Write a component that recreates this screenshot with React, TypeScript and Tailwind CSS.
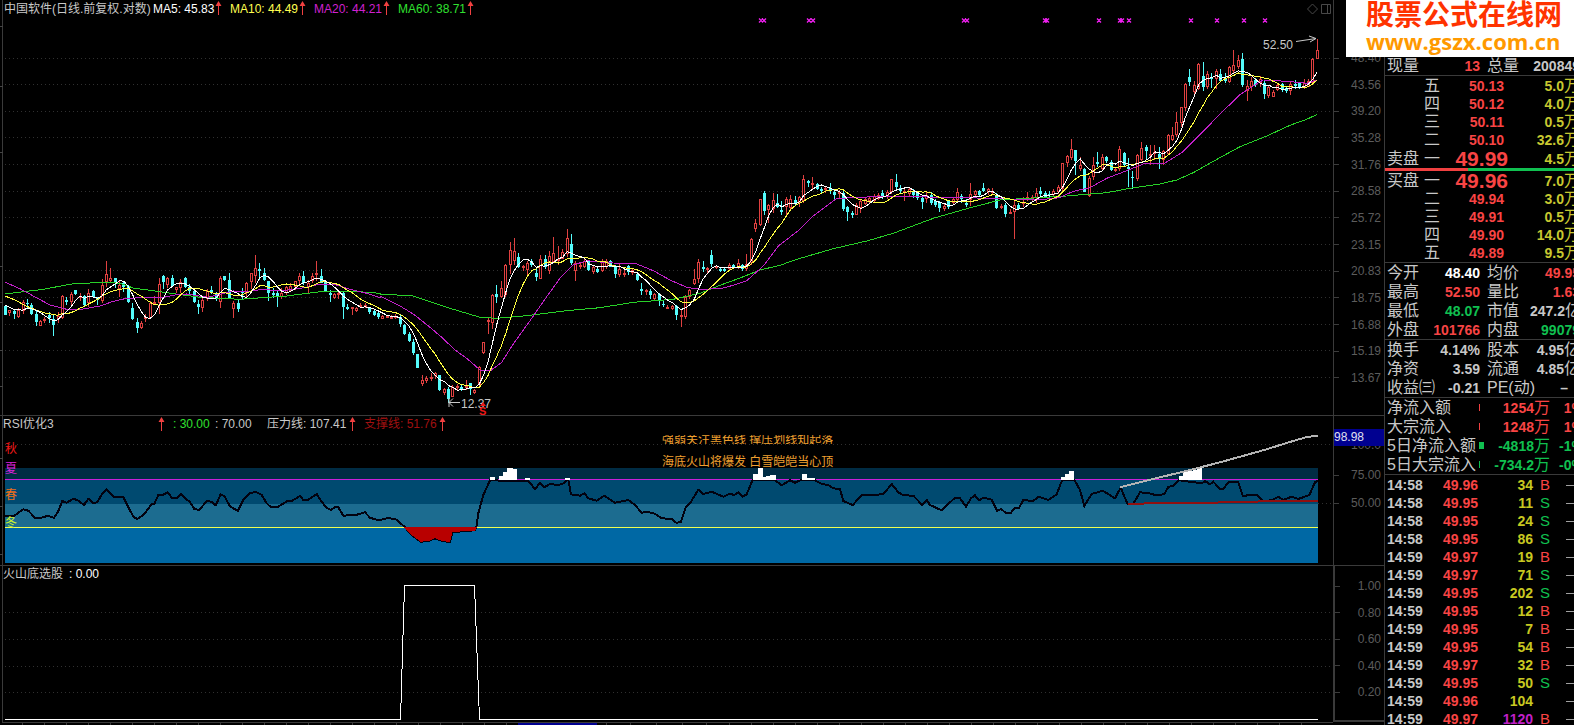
import React from "react";

type Candle = [high: number, top: number, bottom: number, low: number, up: 0 | 1];
type Pt = [number, number];

/* Candle data is stored in thirds of a pixel, measured from the top of each block. */
const blocks: { base: number; rows: Candle[] }[] = [
  {
    base: 240,
    rows: [
      [196,197,224,226,0],[210,211,220,228,1],[210,213,222,236,0],[205,210,232,234,1],[180,186,212,222,1],
      [178,188,192,205,0],[190,195,222,226,0],[210,221,246,257,0],[240,243,257,258,1],[232,236,244,248,1],
      [215,225,235,250,0],[225,237,254,288,0],[216,228,238,248,1],[165,167,235,237,1],[170,181,186,195,0],
      [156,162,186,200,1],[150,151,162,166,0],[158,167,171,184,1],[165,168,196,200,0],[148,158,188,200,1],
      [150,153,172,175,0],[172,175,180,196,0],[116,134,182,188,1],[64,103,125,140,1],[84,115,122,130,1],
      [113,114,125,145,0],[120,135,146,170,1],[122,128,140,155,0],[136,137,186,190,0],[190,205,238,240,0],
      [234,247,264,278,0],[244,248,265,267,1],[222,232,238,246,1],[184,190,235,237,1],[168,186,190,194,1],
      [115,133,188,222,1],[104,107,126,146,0],[112,114,136,143,1],[105,114,137,139,0],[140,142,150,160,1],
      [118,126,144,160,1],[110,113,140,143,0],[132,142,152,166,0],[148,152,186,190,0],[180,191,200,222,0],
      [174,180,204,216,1],[148,154,176,184,1],[138,150,158,162,0],[156,162,178,182,0],[108,113,186,204,1],
      [108,109,121,124,0],[98,120,174,178,0],[184,190,206,234,1],[180,189,206,215,0],[145,155,160,180,0],
      [126,130,160,178,1],[98,100,126,146,1],[44,85,108,130,1],[68,88,92,120,0],[84,98,120,124,0],
      [122,123,160,182,0],[145,160,166,174,0],[150,160,167,202,0],[145,158,170,178,1],[138,142,158,164,1],
      [130,138,152,156,1],[122,124,140,150,1],[100,108,124,134,1],[94,108,128,134,0],[120,128,140,158,1],
      [98,108,124,130,1],[62,98,106,124,1],[86,108,128,130,0],[122,127,154,156,0],[150,160,166,186,0],
      [158,162,174,178,1],[154,158,166,176,1],[155,160,202,237,0],[192,200,206,210,0],[200,202,206,224,1],
      [202,205,212,216,1],[190,196,202,204,1],[190,194,200,204,1],[200,203,216,222,0],[208,212,226,228,0],
      [214,220,232,238,0],[226,229,236,238,1],[226,229,232,234,1],[226,230,233,236,1],[222,228,233,236,1],
    ],
  },
  {
    base: 200,
    rows: [
      [344,350,372,382,0],[372,374,402,404,0],[396,402,423,426,0],[418,425,460,466,0],[461,462,503,504,0],
      [524,541,551,557,1],[528,534,542,550,1],[520,530,534,544,1],[516,520,528,536,1],[524,526,570,572,0],
      [564,568,580,584,1],[562,568,596,610,0],[555,560,590,592,1],[552,557,562,572,1],[556,562,566,574,0],
      [541,558,564,570,1],[548,550,568,584,0],[566,570,578,582,1],[498,500,556,560,1],[426,427,460,462,1],
      [355,360,367,402,1],[282,284,370,388,1],[256,282,292,309,0],[244,264,292,294,1],[192,194,286,290,1],
      [126,150,194,222,1],[114,154,184,194,1],[158,170,200,204,0],[194,197,203,212,1],[184,188,210,228,1],
      [178,184,196,200,0],[202,220,230,243,0],[164,177,236,237,1],[164,178,200,206,0],[154,168,212,222,1],
      [110,158,186,190,1],[138,178,184,196,1],[146,156,176,178,1],[86,115,162,170,1],[102,132,190,194,0],
      [182,190,214,242,1],[190,196,202,206,1],[170,182,202,204,1],[180,182,210,212,0],[194,202,216,222,1],
      [198,206,216,219,0],[177,182,214,216,1],[178,184,202,208,1],[180,184,200,202,0],[196,202,222,234,0],
      [192,208,226,232,1],[206,218,221,230,1],[194,198,216,226,0],[205,210,220,226,1],[218,222,240,244,0],
      [250,266,272,286,0],[266,269,274,284,1],[268,272,286,298,0],[278,282,296,302,1],[280,283,302,318,0],
      [300,312,316,320,0],[316,320,324,328,1],[314,317,328,330,1],[314,317,346,360,0],[330,344,348,382,1],
      [286,292,350,356,1],[266,270,290,296,1],[206,236,253,256,1],[176,186,238,250,1],[184,200,206,216,0],
      [200,204,210,218,1],[150,165,192,200,0],[194,198,202,208,1],[200,206,212,216,0],[204,208,212,216,0],
      [190,194,208,212,1],[192,196,204,208,0],[176,190,204,208,1],[192,196,208,212,0],[162,192,208,214,1],
      [114,116,188,194,1],
    ],
  },
  {
    base: 120,
    rows: [
      [296,310,328,336,1],[236,238,316,318,1],[213,218,272,284,0],[252,254,270,308,1],[220,240,268,278,1],
      [222,248,260,264,0],[244,270,276,286,0],[230,236,262,284,1],[224,236,264,272,1],[228,240,248,256,0],
      [228,232,250,262,1],[165,178,244,250,1],[180,184,190,202,0],[170,188,193,206,1],[188,192,206,210,0],
      [202,208,213,222,0],[198,203,208,218,1],[190,203,212,222,0],[210,215,224,240,0],[210,215,220,236,1],
      [212,218,268,274,0],[258,260,275,302,0],[272,280,284,294,0],[250,255,284,286,1],[238,244,264,278,1],
      [230,236,252,256,1],[230,234,244,250,1],[222,228,242,250,1],[220,226,236,240,1],[210,220,232,238,0],
      [210,216,232,238,1],[176,178,216,222,1],[163,186,200,208,0],[196,204,212,220,0],[206,212,220,244,1],
      [202,208,222,228,1],[206,212,226,234,0],[216,220,234,240,0],[228,234,246,266,0],[216,224,236,250,1],
      [216,224,250,256,0],[236,242,256,260,0],[244,250,263,276,0],[250,258,268,274,1],[240,244,260,266,0],
      [232,238,248,252,1],[204,216,240,246,1],[222,228,236,250,0],[236,248,256,262,0],[188,222,240,258,1],
      [210,214,224,230,1],[210,214,224,230,0],[188,203,212,216,0],[204,208,216,226,1],[204,212,220,226,1],
      [218,224,264,268,0],[252,258,262,266,1],[250,256,282,290,0],[268,275,280,283,1],[244,256,276,356,1],
      [250,256,266,270,0],[232,246,252,262,1],[216,232,240,244,1],[224,230,236,244,1],[204,218,234,248,1],
      [202,214,222,228,0],[212,218,230,234,0],[214,222,226,230,0],[206,214,224,230,1],[196,202,216,222,1],
    ],
  },
  {
    base: 0,
    rows: [
      [488,490,566,574,1],[466,469,488,502,1],[416,448,474,480,1],[450,450,482,524,0],[470,494,506,512,1],
      [505,507,575,577,0],[528,534,588,590,1],[472,494,530,540,1],[456,486,492,500,0],[462,470,508,512,1],
      [468,472,484,490,0],[480,486,510,514,0],[500,506,514,516,1],[438,446,506,512,1],[456,460,494,500,0],
      [474,500,506,562,0],[512,530,534,566,0],[462,466,538,542,1],[426,443,480,484,1],[434,440,452,480,0],
      [436,462,466,494,1],[436,456,462,480,1],[442,462,478,506,0],[450,454,480,494,1],[402,404,462,466,1],
      [380,406,420,424,1],[336,366,406,412,1],[320,322,368,382,1],[248,251,324,334,1],[208,230,246,258,0],
      [244,254,276,286,1],[190,193,268,270,1],[186,228,260,272,0],[212,222,262,266,1],[220,234,238,264,0],
      [208,212,238,266,1],[208,222,242,246,0],[220,234,244,248,0],[198,202,246,248,1],[150,194,214,218,1],
      [164,180,202,206,1],[158,178,254,260,0],[240,258,274,302,1],[230,244,262,272,1],[234,240,256,262,0],
      [228,236,250,262,1],[244,249,282,296,0],[258,262,288,294,1],[270,276,290,292,1],[250,255,270,274,1],
      [248,252,270,276,0],[258,264,272,278,0],[246,252,274,286,1],[240,252,258,268,0],[248,250,262,266,0],
      [238,250,262,266,1],[236,242,260,262,1],[174,176,250,252,1],[116,150,176,178,1],
    ],
  },
];

const step = 4.387;
const candles = blocks
  .flatMap((b) => b.rows.map(([h, t, bt, l, up]) => ({ h: b.base + h / 3, t: b.base + t / 3, b: b.base + bt / 3, l: b.base + l / 3, up: up === 1 })))
  .map((c, i) => ({ ...c, x: 5.5 + step * i }));

const closes = candles.map((c) => (c.up ? c.t : c.b));

function average(n: number, lead: Pt[]): string {
  const pts: Pt[] = [...lead];
  for (let i = n - 1; i < closes.length; i++) {
    let s = 0;
    for (let k = 0; k < n; k++) s += closes[i - k];
    pts.push([candles[i].x, s / n]);
  }
  return pts.map((p) => p[0].toFixed(1) + "," + p[1].toFixed(1)).join(" ");
}

function trace(parts: [number, number, Pt[]][]): string {
  return parts
    .flatMap(([ox, oy, pts]) => pts.map((p) => (ox + p[0] / 3).toFixed(1) + "," + (oy + p[1] / 3).toFixed(1)))
    .join(" ");
}

const ma5 = average(5, [[5, 305], [13, 309]]);
const ma10 = average(10, [[5, 296], [15, 300], [26, 306], [36, 310]]);
const ma20 = trace([
  [0, 240, [[16,127],[60,146],[100,168],[150,195],[200,208],[250,207],[300,198],[340,184],[380,175],[430,173],[480,174],[530,164],[560,162],[590,167],[625,172],[650,165],[700,153],[740,155],[790,148],[840,153],[880,148],[920,142],[960,132],[1000,132],[1050,148],[1100,160],[1140,173]]],
  [380, 200, [[0,288],[60,318],[100,342],[150,382],[185,412],[225,450],[260,475],[300,510],[330,513],[365,487],[400,432],[450,362],[500,290],[540,235],[580,195],[620,182],[660,186],[700,189],[770,192],[820,212],[870,240],[920,262],[960,268],[1020,266],[1060,256],[1100,242],[1150,198]]],
  [700, 120, [[235,378],[300,328],[340,288],[410,235],[440,234],[520,230],[650,230],[750,233],[830,234],[900,236],[1000,239],[1060,236]]],
  [1040, 0, [[60,592],[100,574],[150,563],[200,535],[250,516],[310,492],[375,489],[425,458],[480,404],[540,342],[600,284],[640,258],[670,240],[740,244],[800,250],[830,241]]],
]);
const ma60 = trace([
  [0, 240, [[16,162],[130,148],[220,131],[320,127],[360,130],[400,144],[500,158],[600,172],[720,178],[860,168],[960,155],[1060,154],[1140,160]]],
  [380, 200, [[0,282],[100,288],[200,322],[300,352],[350,355],[440,347],[560,332],[660,323],[760,307],[880,298],[960,280],[1020,256],[1080,234],[1140,210],[1200,196]]],
  [700, 120, [[290,418],[400,386],[500,363],[580,340],[700,295],[800,266],[900,240],[1000,234],[1100,228]]],
  [1040, 0, [[140,583],[200,578],[270,565],[360,552],[410,540],[460,518],[520,484],[600,440],[680,408],[750,376],[800,358],[832,343]]],
]);

const rsi = trace([
  [0, 405, [[16,333],[40,334],[70,313],[85,317],[105,338],[125,338],[145,332],[162,339],[175,318],[187,288],[200,293],[220,281],[235,287],[252,300],[265,281],[280,294],[292,292],[305,269],[320,254],[340,275],[370,276],[385,306],[400,335],[412,342],[430,330],[455,298],[463,297],[475,270],[490,269],[503,262],[515,278],[530,279],[543,267],[560,284],[570,291],[583,312],[598,315],[620,288],[635,290],[647,301],[662,268],[673,273],[690,304],[713,318],[730,285],[750,265],[767,260],[785,270],[800,295],[812,306],[835,305],[860,289],[875,288],[900,273],[910,285],[925,284],[950,267],[965,290],[980,309],[993,315],[1005,306],[1015,307],[1030,332],[1070,329],[1095,322],[1110,338],[1135,346],[1165,339],[1190,344],[1215,367],[1235,390],[1262,410],[1285,408],[1305,400],[1325,407],[1350,412],[1357,382],[1395,378],[1425,376],[1430,362],[1435,325]]],
  [480, 405, [[10,270],[30,226],[110,228],[145,227],[165,252],[180,234],[193,247],[210,237],[235,240],[250,235],[265,224],[273,268],[300,272],[313,265],[325,280],[350,287],[372,272],[405,293],[445,285],[465,300],[485,323],[500,320],[525,326],[545,340],[575,342],[590,354],[603,350],[617,308],[630,295],[655,254],[670,267],[695,260],[730,275],[750,266],[763,270],[775,262],[787,275],[800,268],[818,224],[885,226],[905,241],[930,226],[945,233],[965,224],[1005,226],[1025,237],[1045,240],[1060,250],[1080,252],[1090,288],[1118,300],[1145,271],[1210,268],[1235,237],[1255,262]]],
  [900, 405, [[10,271],[40,272],[67,300],[80,285],[90,300],[125,316],[165,278],[180,280],[198,305],[213,280],[225,271],[237,286],[250,278],[275,284],[292,318],[303,312],[318,324],[333,323],[345,308],[357,309],[370,285],[400,288],[415,275],[445,285],[470,268],[487,224],[523,224],[540,255],[553,303],[575,267],[608,257],[645,280],[662,248],[683,298],[700,296],[720,262],[745,264],[765,270],[793,268],[805,246],[820,242],[837,226],[905,235],[915,228],[930,238],[940,230],[960,252],[970,252],[985,232],[1015,232],[1028,272],[1070,270],[1090,288],[1115,286],[1135,275],[1150,285],[1175,275],[1195,282],[1228,270],[1245,232],[1254,227]]],
]);
const oversold = trace([[0, 405, [[1209,366],[1235,390],[1262,410],[1285,408],[1305,400],[1325,407],[1350,412],[1357,382],[1395,378],[1425,379],[1431,366]]]]);
const pressure = trace([[900, 405, [[660,247],[750,224],[850,200],[960,172],[1100,133],[1150,117],[1220,96],[1254,92]]]]);
const support = trace([[900, 405, [[683,298],[745,295],[930,293],[1100,289],[1254,288]]]]);

/* [left, top, width] of each snow-cap column; all of them stand on the 70 line */
const caps: [number, number, number][] = [
  [490,477,5],[499,476,5],[503,472,5],[507,468,6],[512,469,5],[525,478,5],[565,478,5],
  [753,474,5],[758,468,5],[762,477,5],[766,476,5],[770,475,6],[802,474,5],[807,478,8],
  [1061,477,4],[1065,474,5],[1069,471,5],[1179,476,4],[1183,472,5],[1187,471,6],[1193,470,4],[1197,467,5],
];

const grid = [58,84,111,137,164,191,217,244,270,297,324,350,377];
const marks = [761,764,809,813,964,967,1045,1047,1099,1120,1122,1129,1191,1217,1244,1265];
const days = [22,44,66,88,110,132,154,176,198,220,242,264,286,308,330,352,374,396,418,440,462,484,506,606,630,656,682,706,729,751,773,795,817,839,861,883,905,927,949,971,993,1015,1037,1059,1081,1103,1125,1147,1169,1191,1213,1235,1257,1279,1301];

function Arrow({ className }: { className: string }) {
  return (
    <svg className={"absolute top-px h-[14px] w-[7px] " + className} viewBox="0 0 7 14" aria-hidden="true">
      <path d="M3.5 0 6.5 5H.5zM3 4h1v10H3z" fill="#f04040" />
    </svg>
  );
}

function LeftTicks({ ys }: { ys: number[] }) {
  return <path d={ys.map((y) => `M0 ${y}.5h3`).join("")} stroke="#444" />;
}

function AxisLabel({ children }: { children: string }) {
  return (
    <div className="flex h-3 items-center justify-between pr-[3px] text-xs leading-3">
      <span className="h-px w-[5px] bg-[#3c3c3c]" />
      <span>{children}</span>
    </div>
  );
}

function PricePane() {
  return (
    <section className="flex h-[416px] border-b border-[#3a3a3a]">
      <div className="flex min-w-0 flex-1 flex-col">
        <header className="ml-[2px] flex h-[18px] items-center border-l border-[#3a3a3a] text-xs leading-[18px]">
          <h1 className="w-[150px] whitespace-nowrap pl-px text-[#c8c8c8]">中国软件(日线.前复权.对数)</h1>
          <span className="relative w-[77px] text-white">MA5: 45.83<Arrow className="left-[62px]" /></span>
          <span className="relative w-[84px] text-[#ffff50]">MA10: 44.49<Arrow className="left-[69px]" /></span>
          <span className="relative w-[84px] text-[#d020d0]">MA20: 44.21<Arrow className="left-[69px]" /></span>
          <span className="relative w-[84px] text-[#30e030]">MA60: 38.71<Arrow className="left-[69px]" /></span>
          <svg className="ml-auto h-[12px] w-[26px]" viewBox="0 0 26 12" fill="none" stroke="#484848" aria-hidden="true">
            <path d="M5.5 1 10.5 6 5.5 11 .5 6zM14.5 1.5h9v9h-9zM20.5 1.5v9" />
          </svg>
        </header>
        <svg className="min-h-0 w-full flex-1" viewBox="0 18 1333 397" preserveAspectRatio="none" role="img" aria-label="日线">
          <path d="M2.5 18V415" stroke="#3a3a3a" shapeRendering="crispEdges" />
          <LeftTicks ys={[26, 86, 152, 266, 302, 350, 386]} />
          <path d={grid.map((y) => `M5 ${y}.5H1333`).join("")} stroke="#303030" strokeDasharray="1 3" shapeRendering="crispEdges" />
          <g shapeRendering="crispEdges">
            {candles.map((c, i) => {
              const x = Math.floor(c.x);
              const t = Math.round(c.t);
              const h = Math.max(1, Math.round(c.b) - t);
              return c.up ? (
                <g key={i} stroke="#e04040" fill="#000">
                  <path d={`M${x + 0.5} ${Math.round(c.h)}V${Math.round(c.l)}`} />
                  <rect x={x - 0.5} y={t + 0.5} width={2} height={Math.max(1, h - 1)} />
                </g>
              ) : (
                <g key={i} fill="#54fcfc">
                  <rect x={x} y={Math.round(c.h)} width={1} height={Math.round(c.l) - Math.round(c.h)} />
                  <rect x={x - 1} y={t} width={3} height={h} />
                </g>
              );
            })}
          </g>
          <g fill="none" shapeRendering="crispEdges">
            <polyline points={ma60} stroke="#28d028" />
            <polyline points={ma20} stroke="#c020c8" />
            <polyline points={ma10} stroke="#ffff40" />
            <polyline points={ma5} stroke="#fff" />
          </g>
          <path d={marks.map((x) => `M${x - 2} 18.5l4 4m0-4l-4 4`).join("")} stroke="#f020f0" strokeWidth="1.300" />
          <g fontSize="12" fill="#c8c8c8">
            <text x="1263" y="49">52.50</text>
            <text x="461" y="408">12.37</text>
          </g>
          <path d="M1296 41.500 1316 38.500M1309 36l7 2.500-6 3.500M460 402.500H449M453 398.500l-4 4 4 4M449 398v9" fill="none" stroke="#c8c8c8" />
          <path d="M483 402l3 4h-6z" fill="#f01818" />
          <text x="479" y="415" fontSize="11" fontWeight="bold" fill="#f01818">S</text>
        </svg>
      </div>
      <div className="flex w-[51px] flex-col justify-between border-l border-[#3a3a3a] pb-[31px] pt-[52px] text-[#5c5c5c]">
        {["48.40","43.56","39.20","35.28","31.76","28.58","25.72","23.15","20.83","18.75","16.88","15.19","13.67"].map((v) => (
          <AxisLabel key={v}>{v}</AxisLabel>
        ))}
      </div>
    </section>
  );
}

function RsiPane() {
  return (
    <section className="flex h-[150px] border-b border-[#3a3a3a]">
      <div className="relative flex min-w-0 flex-1 flex-col">
        <header className="ml-[2px] flex h-[16px] items-center border-l border-[#3a3a3a] text-xs leading-4 text-[#c8c8c8]">
          <h2 className="relative w-[170px]">RSI优化3<Arrow className="left-[155px]" /></h2>
          <span className="w-[42px] text-[#30e030]">: 30.00</span>
          <span className="w-[52px]">: 70.00</span>
          <span className="relative w-[97px]">压力线: 107.41<Arrow className="left-[82px]" /></span>
          <span className="relative w-[90px] text-[#a01010]">支撑线: 51.76<Arrow className="left-[75px]" /></span>
        </header>
        <svg className="min-h-0 w-full flex-1" viewBox="0 432 1333 133" preserveAspectRatio="none" role="img" aria-label="RSI优化3">
          <path d="M2.5 432V565" stroke="#3a3a3a" shapeRendering="crispEdges" />
          <LeftTicks ys={[458, 506, 554]} />
          <path d="M5 444.500H1333M1318 503.500H1333" stroke="#303030" strokeDasharray="1 3" shapeRendering="crispEdges" />
          <g shapeRendering="crispEdges">
            <rect x="5" y="468" width="1313" height="12" fill="#002c44" />
            <rect x="5" y="480" width="1313" height="24" fill="#004a70" />
            <rect x="5" y="504" width="1313" height="24" fill="#1c6c90" />
            <rect x="5" y="528" width="1313" height="35" fill="#0068a4" />
            <rect x="5" y="479" width="1313" height="1" fill="#c820d8" />
            <rect x="5" y="527" width="1313" height="1" fill="#f0ff50" />
          </g>
          <polyline points={rsi} fill="none" stroke="#020210" strokeWidth="2" shapeRendering="crispEdges" />
          <polygon points={oversold} fill="#b80000" shapeRendering="crispEdges" />
          <g fill="#fff" shapeRendering="crispEdges">
            {caps.map(([x, y, w]) => (
              <rect key={x} x={x} y={y} width={w} height={480 - y} />
            ))}
          </g>
          <polyline points={support} fill="none" stroke="#901010" strokeWidth="2" shapeRendering="crispEdges" />
          <polyline points={pressure} fill="none" stroke="#b4b4b4" strokeWidth="2" shapeRendering="crispEdges" />
        </svg>
        <span className="absolute left-[5px] top-[27px] text-xs leading-3 text-[#f01818]">秋</span>
        <span className="absolute left-[5px] top-[47px] text-xs leading-3 text-[#e020e0]">夏</span>
        <span className="absolute left-[5px] top-[73px] text-xs leading-3 text-[#f07018]">春</span>
        <span className="absolute left-[5px] top-[101px] text-xs leading-3 text-[#c8f030]">冬</span>
        <div className="absolute left-[662px] top-[19px] flex h-[9px] items-center overflow-hidden whitespace-nowrap text-xs leading-3 text-[#f0a030]">
          强弱关注黑色线 撑压划线知起落
        </div>
        <div className="absolute left-[662px] top-[39px] whitespace-nowrap text-xs leading-[14px] text-[#f0a030]">海底火山将爆发 白雪皑皑当心顶</div>
      </div>
      <div className="flex w-[51px] flex-col border-l border-[#3a3a3a] pt-[13px] text-[#5c5c5c]">
        <output className="z-10 h-[17px] bg-[#000090] text-xs leading-[17px] text-[#e0e0f0]">98.98</output>
        <div className="-mt-[7px]"><AxisLabel>100.0</AxisLabel></div>
        <div className="mt-[18px]"><AxisLabel>75.00</AxisLabel></div>
        <div className="mt-[16px]"><AxisLabel>50.00</AxisLabel></div>
      </div>
    </section>
  );
}

function SignalPane() {
  return (
    <section className="flex h-[156px]">
      <div className="flex min-w-0 flex-1 flex-col">
        <header className="ml-[2px] flex h-[16px] items-center gap-[6px] border-l border-[#3a3a3a] text-xs leading-4 text-[#c8c8c8]">
          <h2>火山底选股</h2>
          <span className="text-white">: 0.00</span>
        </header>
        <svg className="min-h-0 w-full flex-1" viewBox="0 582 1333 140" preserveAspectRatio="none" role="img" aria-label="火山底选股">
          <path d="M2.5 582V722" stroke="#3a3a3a" shapeRendering="crispEdges" />
          <path d="M5 612.500H1333M5 639.500H1333M5 666.500H1333M5 692.500H1333" stroke="#303030" strokeDasharray="1 3" shapeRendering="crispEdges" />
          <path d="M5 719.500H400.500L404.500 585.500H474.500L479.500 719.500H1318" fill="none" stroke="#fff" shapeRendering="crispEdges" />
        </svg>
      </div>
      <div className="flex w-[51px] flex-col justify-between border-2 border-r-0 border-t-0 border-[#3a3a3a] pb-[22px] pt-[14px] text-[#5c5c5c]">
        {["1.00", "0.80", "0.60", "0.40", "0.20"].map((v) => (
          <AxisLabel key={v}>{v}</AxisLabel>
        ))}
      </div>
    </section>
  );
}

const RED = "text-[#f84444]";
const GREEN = "text-[#10c050]";
const YELLOW = "text-[#c8c830]";
const GREY = "text-[#c8c8c8]";

type Level = [side: string, level: string, price: string, volume: string];
const asks: Level[] = [["", "五", "50.13", "5.0"], ["", "四", "50.12", "4.0"], ["", "三", "50.11", "0.5"], ["", "二", "50.10", "32.6"], ["卖盘", "一", "49.99", "4.5"]];
const bids: Level[] = [["买盘", "一", "49.96", "7.0"], ["", "二", "49.94", "3.0"], ["", "三", "49.91", "0.5"], ["", "四", "49.90", "14.0"], ["", "五", "49.89", "9.5"]];

function Levels({ rows }: { rows: Level[] }) {
  return (
    <table className="w-[193px] table-fixed border-collapse">
      <tbody>
        {rows.map(([side, level, price, volume]) => (
          <tr key={level} className={side ? "h-[19px]" : "h-[18px]"}>
            <th className="w-[37px] p-0 text-left text-base leading-[18px] font-normal text-[#c8c8c8]">{side}</th>
            <th className="w-[17px] p-0 text-left text-base leading-[18px] font-normal text-[#c8c8c8]">{level}</th>
            <td className={"w-[67px] p-0 text-right font-bold leading-[18px] " + RED + (side ? " text-[21px]" : " pr-1 text-sm")}>{price}</td>
            <td className={"p-0 text-right text-sm leading-[16px] font-bold " + YELLOW}>
              {volume}
              <span className="text-base leading-[16px] font-normal">万</span>
            </td>
          </tr>
        ))}
      </tbody>
    </table>
  );
}

type Stat = [string, string, string, string, string, string, string?];

function Stats({ rows }: { rows: Stat[] }) {
  return (
    <table className="w-[193px] table-fixed border-collapse">
      <tbody>
        {rows.map(([a, av, ac, b, bv, bc, unit]) => (
          <tr key={a} className="h-[19px]">
            <th className="w-[45px] whitespace-nowrap p-0 text-left text-base leading-[18px] font-normal text-[#c8c8c8]">{a}</th>
            <td className={"w-[48px] p-0 text-right text-sm leading-[16px] font-bold " + ac}>{av}</td>
            <th className="w-[50px] whitespace-nowrap p-0 pl-[7px] text-left text-base leading-[18px] font-normal text-[#c8c8c8]">{b}</th>
            <td className={"whitespace-nowrap p-0 text-right text-sm leading-[16px] font-bold " + bc}>
              {bv}
              {unit && <span className="text-base leading-[16px] font-normal">{unit}</span>}
            </td>
          </tr>
        ))}
      </tbody>
    </table>
  );
}

const flows: [string, string, string, string, string][] = [
  ["净流入额", "1254", "1%", RED, "w-px bg-[#f04040]"],
  ["大宗流入", "1248", "1%", RED, "w-px bg-[#f04040]"],
  ["5日净流入额", "-4818", "-1%", GREEN, "w-[5px] bg-[#10c050]"],
  ["5日大宗流入", "-734.2", "-0%", GREEN, "w-px bg-[#10c050]"],
];

const trades: [string, string, string, string][] = [
  ["14:58", "49.96", "34", "B"], ["14:58", "49.95", "11", "S"], ["14:58", "49.95", "24", "S"], ["14:58", "49.95", "86", "S"],
  ["14:59", "49.97", "19", "B"], ["14:59", "49.97", "71", "S"], ["14:59", "49.95", "202", "S"], ["14:59", "49.95", "12", "B"],
  ["14:59", "49.95", "7", "B"], ["14:59", "49.95", "54", "B"], ["14:59", "49.97", "32", "B"], ["14:59", "49.95", "50", "S"],
  ["14:59", "49.96", "104", ""], ["14:59", "49.97", "1120", "B"],
];

function QuotePanel() {
  return (
    <aside className="w-[190px] shrink-0 overflow-hidden border-l border-[#3a3a3a]">
      <div className="w-[210px]">
        <div className="border-b border-[#3a3a3a] pl-[2px] pt-[56px]">
          <Stats rows={[["现量", "13", RED, "总量", "200849", GREY]]} />
        </div>
        <div className="pl-[2px] pt-px"><Levels rows={asks} /></div>
        <div className="flex h-[3px]">
          <div className="w-[83px] bg-[#f04040]" />
          <div className="flex-1 bg-[#10c050]" />
        </div>
        <div className="border-b border-[#3a3a3a] pl-[2px]"><Levels rows={bids} /></div>
        <div className="border-b border-[#3a3a3a] pl-[2px]">
          <Stats
            rows={[
              ["今开", "48.40", "text-white", "均价", "49.95", RED],
              ["最高", "52.50", RED, "量比", "1.63", RED],
              ["最低", "48.07", GREEN, "市值", "247.2", GREY, "亿"],
              ["外盘", "101766", RED, "内盘", "99079", GREEN],
            ]}
          />
        </div>
        <div className="border-b border-[#3a3a3a] pl-[2px]">
          <Stats
            rows={[
              ["换手", "4.14%", GREY, "股本", "4.95", GREY, "亿"],
              ["净资", "3.59", GREY, "流通", "4.85", GREY, "亿"],
              ["收益㈢", "-0.21", GREY, "PE(动)", "–", GREY + " pr-3"],
            ]}
          />
        </div>
        <table className="ml-[2px] w-[197px] table-fixed border-collapse">
          <tbody>
            {flows.map(([label, value, pct, color, bar]) => (
              <tr key={label} className="h-[19px]">
                <th className="w-[92px] whitespace-nowrap p-0 text-left text-base leading-[18px] font-normal text-[#c8c8c8]">{label}</th>
                <td className="w-[6px] p-0"><div className={"h-[7px] " + bar} /></td>
                <td className={"w-[65px] whitespace-nowrap p-0 text-right text-sm leading-[16px] font-bold " + color}>
                  {value}
                  <span className="text-base leading-[16px] font-normal">万</span>
                </td>
                <td className={"p-0 text-right text-sm leading-[16px] font-bold " + color}>{pct}</td>
              </tr>
            ))}
          </tbody>
        </table>
        <div className="border-t border-[#3a3a3a] pl-[2px] pt-px">
          <table className="w-[205px] table-fixed border-collapse">
            <tbody>
              {trades.map(([time, price, volume, side], i) => (
                <tr key={i} className="h-[18px] text-sm leading-[18px] font-bold">
                  <td className="w-[46px] p-0 text-[#c8c8c8]">{time}</td>
                  <td className={"w-[45px] p-0 text-right " + RED}>{price}</td>
                  <td className={"w-[55px] p-0 text-right " + (volume === "1120" ? "text-[#c020c8]" : "text-[#c8c820]")}>{volume}</td>
                  <td className={"w-[33px] p-0 pl-[7px] text-[15px] leading-[18px] font-normal " + (side === "B" ? RED : GREEN)}>{side}</td>
                  <td className="p-0"><div className="h-px bg-[#a0a0a0]" /></td>
                </tr>
              ))}
            </tbody>
          </table>
        </div>
      </div>
    </aside>
  );
}

export default function App() {
  return (
    <div className="relative flex h-screen overflow-hidden bg-black font-['Liberation_Sans','Noto_Sans_CJK_SC',sans-serif]">
      <main className="min-w-0 flex-1">
        <PricePane />
        <RsiPane />
        <SignalPane />
        <svg className="block h-[3px] w-full" viewBox="0 0 1384 3" preserveAspectRatio="none" shapeRendering="crispEdges" aria-hidden="true">
          <path d={days.map((x) => `M${x}.5 0v3`).join("") + "M2 .5H1333"} stroke="#3a3a3a" />
          <rect x="518" y="1" width="79" height="2" fill="#000090" />
        </svg>
      </main>
      <QuotePanel />
      <a href="#top" className="absolute right-0 top-0 flex h-[57px] w-[228px] flex-col items-start bg-white pl-[20px] font-bold">
        <span className="whitespace-nowrap text-[28px] leading-[32px] text-[#ff3300]">股票公式在线网</span>
        <span className="font-['Open_Sans',sans-serif] text-[22px] leading-[18px] text-[#ff9900]">www.gszx.com.cn</span>
      </a>
    </div>
  );
}
